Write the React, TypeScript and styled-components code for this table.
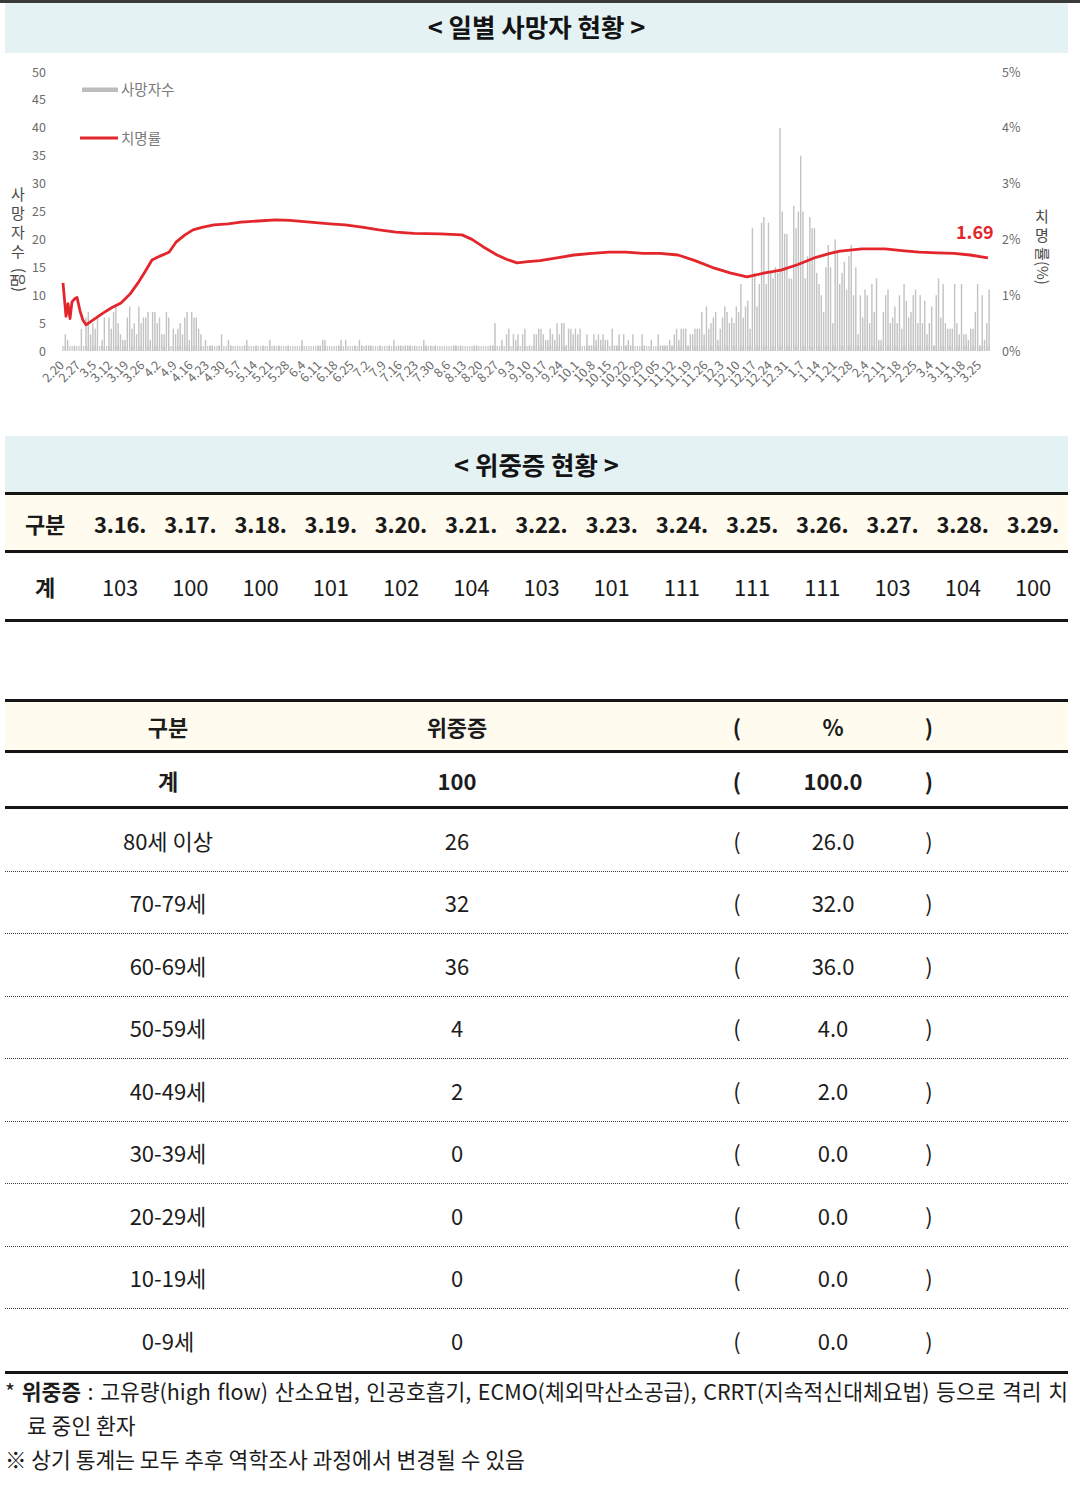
import styled, { createGlobalStyle } from "styled-components";

// 전체 페이지 기본 스타일
const GlobalStyle = createGlobalStyle`
  html, body {
    margin: 0;
    padding: 0;
    background: #ffffff;
  }
  body {
    font-family: "Noto Sans CJK KR", "Noto Sans", sans-serif;
    color: #1a1a1a;
    overflow: hidden;
  }
  * {
    box-sizing: border-box;
  }
`;

// 차트 좌표계 (페이지 좌표 그대로 사용)
const X0 = 63;
const DX = 2.298;
const Y0 = 351;
const UNIT = 5.58;
const DAYS = 404;

const xTicks = [
  "2.20", "2.27", "3.5", "3.12", "3.19", "3.26", "4.2", "4.9", "4.16", "4.23",
  "4.30", "5.7", "5.14", "5.21", "5.28", "6.4", "6.11", "6.18", "6.25", "7.2",
  "7.9", "7.16", "7.23", "7.30", "8.6", "8.13", "8.20", "8.27", "9.3", "9.10",
  "9.17", "9.24", "10.1", "10.8", "10.15", "10.22", "10.29", "11.05", "11.12",
  "11.19", "11.26", "12.3", "12.10", "12.17", "12.24", "12.31", "1.7", "1.14",
  "1.21", "1.28", "2.4", "2.11", "2.18", "2.25", "3.4", "3.11", "3.18", "3.25",
];

//치명률 곡선 (x, %)
const ratePoints: [number, number][] = [
  [63, 1.22], [66, 0.62], [68, 0.85], [70, 0.58], [72, 0.88], [75, 0.94], [77, 0.96],
  [80, 0.72], [83, 0.55], [86, 0.47], [95, 0.58], [103, 0.68], [112, 0.78],
  [121, 0.86], [130, 1.02], [138, 1.22], [145, 1.42], [152, 1.63], [160, 1.7],
  [169, 1.77], [176, 1.95], [185, 2.08], [193, 2.17], [203, 2.22], [214, 2.26],
  [228, 2.28], [241, 2.31], [258, 2.33], [276, 2.35], [290, 2.34], [310, 2.31],
  [330, 2.28], [345, 2.26], [362, 2.22], [379, 2.17], [396, 2.13], [414, 2.11],
  [440, 2.1], [462, 2.08], [472, 2.0], [483, 1.87], [497, 1.72], [507, 1.64],
  [517, 1.58], [528, 1.6], [540, 1.62], [557, 1.67], [574, 1.72], [592, 1.75],
  [609, 1.77], [626, 1.77], [643, 1.75], [660, 1.75], [678, 1.72], [695, 1.62],
  [712, 1.5], [730, 1.4], [747, 1.33], [765, 1.4], [781, 1.45], [798, 1.55],
  [816, 1.68], [830, 1.75], [840, 1.79], [862, 1.83], [885, 1.83], [902, 1.8],
  [919, 1.77], [937, 1.76], [954, 1.75], [970, 1.72], [988, 1.67],
];

// 일별 사망자수 구간 (시작일, 끝일, 최소, 최대, 0일 확률)
const bands: [number, number, number, number, number][] = [
  [0, 9, 0, 4, 0.3],
  [10, 24, 2, 8, 0.05],
  [25, 45, 2, 9, 0],
  [46, 60, 1, 8, 0.05],
  [61, 75, 0, 3, 0.3],
  [76, 185, 0, 2, 0.55],
  [186, 200, 0, 5, 0.2],
  [201, 225, 1, 5, 0.1],
  [226, 275, 0, 4, 0.25],
  [276, 292, 2, 8, 0.05],
  [293, 300, 4, 13, 0],
  [301, 309, 8, 24, 0],
  [310, 330, 10, 26, 0],
  [331, 345, 5, 20, 0],
  [346, 403, 1, 13, 0],
];

const overrides: Record<number, number> = { 312: 40, 321: 35, 300: 22, 305: 24, 318: 26 };

const makeDeaths = () => {
  let s = 20210329;
  const rnd = () => {
    s |= 0;
    s = (s + 0x6d2b79f5) | 0;
    let t = Math.imul(s ^ (s >>> 15), 1 | s);
    t = (t + Math.imul(t ^ (t >>> 7), 61 | t)) ^ t;
    return ((t ^ (t >>> 14)) >>> 0) / 4294967296;
  };
  const out: number[] = [];
  for (let d = 0; d < DAYS; d++) {
    const band = bands.find((b) => d >= b[0] && d <= b[1]) ?? bands[0];
    const [, , lo, hi, zp] = band;
    let v = rnd() < zp ? 0 : Math.round(lo + rnd() * (hi - lo));
    if (overrides[d] !== undefined) v = overrides[d];
    out.push(v);
  }
  return out;
};

const deaths = makeDeaths();

const yCount = (v: number) => Y0 - v * UNIT;
const yRate = (r: number) => Y0 - r * 55.8;

const dailyHeads = [
  "3.16.", "3.17.", "3.18.", "3.19.", "3.20.", "3.21.", "3.22.",
  "3.23.", "3.24.", "3.25.", "3.26.", "3.27.", "3.28.", "3.29.",
];
const dailyValues = [103, 100, 100, 101, 102, 104, 103, 101, 111, 111, 111, 103, 104, 100];

const ageRows = [
  { label: "80세 이상", count: "26", pct: "26.0" },
  { label: "70-79세", count: "32", pct: "32.0" },
  { label: "60-69세", count: "36", pct: "36.0" },
  { label: "50-59세", count: "4", pct: "4.0" },
  { label: "40-49세", count: "2", pct: "2.0" },
  { label: "30-39세", count: "0", pct: "0.0" },
  { label: "20-29세", count: "0", pct: "0.0" },
  { label: "10-19세", count: "0", pct: "0.0" },
  { label: "0-9세", count: "0", pct: "0.0" },
];

const Page = styled.div`
  width: 1080px;
`;

const TopRule = styled.div`
  height: 3px;
  background: #3a3a3a;
`;

const SectionTitle = styled.h2<{ $height: number; $lift: number }>`
  margin: 0 12px 0 5px;
  height: ${({ $height }) => $height}px;
  padding-bottom: ${({ $lift }) => $lift}px;
  background: #e4f2f4;
  display: flex;
  align-items: center;
  justify-content: center;
  font-size: 25.5px;
  font-weight: 700;
  color: #141414;
`;

const ChartSvg = styled.svg`
  display: block;
  width: 1080px;
  height: 383px;

  text {
    font-family: "Noto Sans CJK KR", "Noto Sans", sans-serif;
  }
  .tick {
    font-size: 12.5px;
    fill: #6b6b6b;
  }
  .legend {
    font-size: 14.5px;
    fill: #7a7a7a;
  }
  .axis-title {
    font-size: 15px;
    fill: #4a4a4a;
  }
`;

const DailyGrid = styled.div`
  margin: 0 12px 0 5px;
  display: grid;
  grid-template-columns: 80px repeat(14, 1fr);
  border-top: 3px solid #151515;
  border-bottom: 3px solid #151515;
`;

const DailyCell = styled.div<{ $head?: boolean; $bold?: boolean }>`
  height: ${({ $head }) => ($head ? 58 : 66)}px;
  display: flex;
  align-items: center;
  justify-content: center;
  font-size: 22px;
  font-weight: ${({ $head, $bold }) => ($head || $bold ? 700 : 400)};
  background: ${({ $head }) => ($head ? "#fffcef" : "#ffffff")};
  border-bottom: ${({ $head }) => ($head ? "3px solid #151515" : "none")};
  letter-spacing: -0.2px;
`;

const AgeTable = styled.div`
  margin: 77px 12px 0 5px;
  border-top: 3px solid #151515;
  border-bottom: 3px solid #151515;
`;

type RowKind = "head" | "total" | "item";

const rowHeight: Record<RowKind, number> = { head: 51, total: 56, item: 62.5 };

const AgeRow = styled.div<{ $kind: RowKind; $last?: boolean }>`
  display: grid;
  grid-template-columns: 326px 252px 144px 20px 172px 20px 1fr;
  align-items: center;
  height: ${({ $kind, $last }) => rowHeight[$kind] - ($last ? 1 : 0)}px;
  background: ${({ $kind }) => ($kind === "head" ? "#fffcef" : "#ffffff")};
  font-weight: ${({ $kind }) => ($kind === "item" ? 400 : 700)};
  border-bottom: ${({ $kind, $last }) =>
    $kind === "item" ? ($last ? "none" : "1px dotted #3c3c3c") : "3px solid #151515"};
`;

const AgeCell = styled.div<{ $col: number }>`
  grid-column: ${({ $col }) => $col};
  text-align: center;
  font-size: 22px;
  color: #1c1c1c;
`;

const Notes = styled.div`
  margin: 0 12px 0 5px;
  font-size: 21.5px;
  line-height: 34px;
  color: #1c1c1c;
`;

const NoteLine = styled.p<{ $hang?: boolean }>`
  margin: 0;
  padding-left: ${({ $hang }) => ($hang ? 22 : 0)}px;
  text-indent: ${({ $hang }) => ($hang ? -22 : 0)}px;
  text-align: justify;

  b {
    font-weight: 700;
  }
`;

const DeathChart = () => {
  const line = ratePoints
    .map(([x, r], i) => `${i === 0 ? "M" : "L"}${x},${yRate(r).toFixed(1)}`)
    .join(" ");
  return (
    <ChartSvg viewBox="0 53 1080 383">
      {/* 좌측 축 */}
      {[0, 5, 10, 15, 20, 25, 30, 35, 40, 45, 50].map((v) => (
        <text key={v} className="tick" x={46} y={yCount(v) + 4.5} textAnchor="end">
          {v}
        </text>
      ))}
      {/* 우측 축 */}
      {[0, 1, 2, 3, 4, 5].map((v) => (
        <text key={v} className="tick" x={1002} y={yRate(v) + 4.5}>
          {v}%
        </text>
      ))}
      {/* 축 제목 */}
      {["사", "망", "자", "수"].map((c, i) => (
        <text key={c} className="axis-title" x={18} y={200 + i * 19} textAnchor="middle">
          {c}
        </text>
      ))}
      <text className="axis-title" x={18} y={280} textAnchor="middle" transform="rotate(-90 18 280)" dy={5}>
        (명)
      </text>
      {["치", "명"].map((c, i) => (
        <text key={c} className="axis-title" x={1042} y={222 + i * 19} textAnchor="middle">
          {c}
        </text>
      ))}
      <text className="axis-title" x={1042} y={266} textAnchor="middle" transform="rotate(90 1042 266)" dy={5}>
        률(%)
      </text>

      {/* 범례 */}
      <rect x={82} y={87.5} width={36} height={4.5} fill="#bdbdbd" />
      <text className="legend" x={121} y={95}>
        사망자수
      </text>
      <line x1={80} y1={138} x2={118} y2={138} stroke="#e3262c" strokeWidth={2.8} />
      <text className="legend" x={121} y={144}>
        치명률
      </text>

      {/* 일별 사망자수 막대 */}
      {deaths.map((v, d) => {
        const x = X0 + d * DX - 0.7;
        return (
          <g key={d}>
            <rect x={x} y={Y0 - 5} width={1.3} height={5} fill="#cbcbcb" />
            {v > 0 && <rect x={x} y={yCount(v)} width={1.4} height={v * UNIT} fill="#c2c2c2" />}
          </g>
        );
      })}

      {/* 치명률 */}
      <path d={line} fill="none" stroke="#e3262c" strokeWidth={2.8} strokeLinejoin="round" />
      <text x={956} y={239} fill="#e3262c" fontSize={18} fontWeight={700}>
        1.69
      </text>

      {/* 날짜 라벨 */}
      {xTicks.map((t, i) => {
        const ax = X0 + i * 16.09 + 2;
        const ay = 366;
        return (
          <text key={t} className="tick" x={ax} y={ay} textAnchor="end" transform={`rotate(-45 ${ax} ${ay})`}>
            {t}
          </text>
        );
      })}
    </ChartSvg>
  );
};

const App = () => {
  return (
    <Page>
      <GlobalStyle />
      <TopRule />
      <SectionTitle $height={50} $lift={6}>
        &lt; 일별 사망자 현황 &gt;
      </SectionTitle>
      <DeathChart />
      <SectionTitle $height={56} $lift={2}>
        &lt; 위중증 현황 &gt;
      </SectionTitle>

      <DailyGrid>
        <DailyCell $head>구분</DailyCell>
        {dailyHeads.map((h) => (
          <DailyCell key={h} $head>
            {h}
          </DailyCell>
        ))}
        <DailyCell $bold>계</DailyCell>
        {dailyValues.map((v, i) => (
          <DailyCell key={i}>{v}</DailyCell>
        ))}
      </DailyGrid>

      <AgeTable>
        <AgeRow $kind="head">
          <AgeCell $col={1}>구분</AgeCell>
          <AgeCell $col={2}>위중증</AgeCell>
          <AgeCell $col={4}>(</AgeCell>
          <AgeCell $col={5}>%</AgeCell>
          <AgeCell $col={6}>)</AgeCell>
        </AgeRow>
        <AgeRow $kind="total">
          <AgeCell $col={1}>계</AgeCell>
          <AgeCell $col={2}>100</AgeCell>
          <AgeCell $col={4}>(</AgeCell>
          <AgeCell $col={5}>100.0</AgeCell>
          <AgeCell $col={6}>)</AgeCell>
        </AgeRow>
        {ageRows.map((r, i) => (
          <AgeRow key={r.label} $kind="item" $last={i === ageRows.length - 1}>
            <AgeCell $col={1}>{r.label}</AgeCell>
            <AgeCell $col={2}>{r.count}</AgeCell>
            <AgeCell $col={4}>(</AgeCell>
            <AgeCell $col={5}>{r.pct}</AgeCell>
            <AgeCell $col={6}>)</AgeCell>
          </AgeRow>
        ))}
      </AgeTable>

      <Notes>
        <NoteLine $hang>
          * <b>위중증</b> : 고유량(high flow) 산소요법, 인공호흡기, ECMO(체외막산소공급), CRRT(지속적신대체요법) 등으로 격리 치료 중인 환자
        </NoteLine>
        <NoteLine>※ 상기 통계는 모두 추후 역학조사 과정에서 변경될 수 있음</NoteLine>
      </Notes>
    </Page>
  );
};

export default App;
